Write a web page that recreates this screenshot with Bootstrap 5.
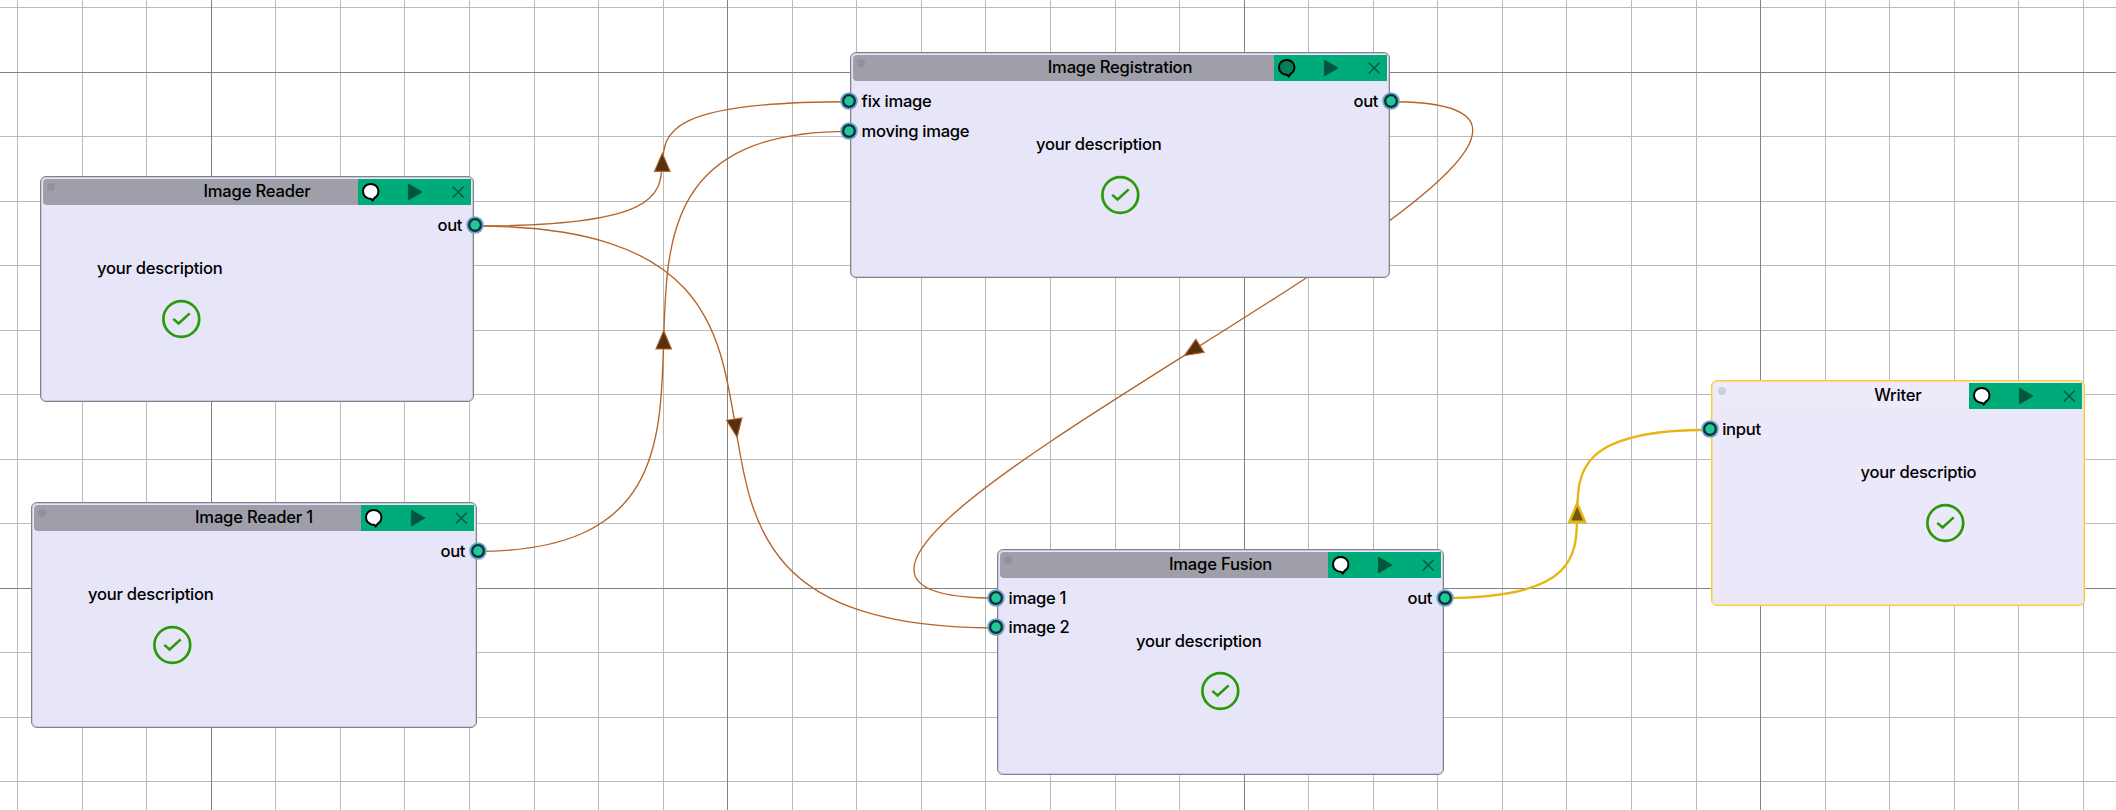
<!DOCTYPE html>
<html lang="en">
<head>
<meta charset="utf-8">
<title>Workflow editor</title>
<link href="https://cdn.jsdelivr.net/npm/bootstrap@5.3.0/dist/css/bootstrap.min.css" rel="stylesheet">
<style>
body { font-family: Inter, "Liberation Sans", sans-serif; font-size: 16.6px; font-weight: 500; letter-spacing: -.3px; line-height: 20px; color: #000; background: #fff; }
.board { width: 2116px; height: 810px; }
.flow-node { position: absolute; height: 226px; border: 1px solid #80838e; border-radius: 6px; background: #e7e6f8; box-shadow: inset 0 0 0 1px #c9c9d9; }
.node-head { height: 26px; margin: 2px 2px 0; border-radius: 4px 0 0 4px; background: #9f9faa; }
.node-title { padding-top: 2px; letter-spacing: -.2px; }
.node-dot { position: absolute; left: 6px; top: 6px; width: 8px; height: 8px; border-radius: 50%; background: #92929c; }
.node-tools { position: absolute; right: 2px; top: 2px; width: 113px; height: 26px; background: #00ab7a; }
.node-body { display: grid; }
.node-body > * { grid-area: 1 / 1; }
.ports { margin-top: 10px; row-gap: 9.7px; }
.port { height: 20px; gap: 3.6px; }
.ports-in { margin-left: -11px; justify-self: start; }
.ports-out { margin-right: -10.8px; justify-self: end; }
.port svg { display: block; }
.widget { width: 168px; margin-top: 53px; }
.widget svg { display: block; margin: 20.5px auto 0; }
.desc { white-space: nowrap; width: 126px; overflow: hidden; letter-spacing: -.25px; }
.active { background: #ebe8f9; border-color: #fbcb38; box-shadow: inset 0 0 0 1px #f7df98; }
.active .node-head { background: #edebfa; }
.active .node-dot { background: #cfcedb; }
.active .desc { width: 116px; }
</style>
</head>
<body class="overflow-hidden">
<svg width="0" height="0" class="position-absolute">
  <symbol id="port" viewBox="0 0 18 18"><circle cx="9" cy="9" r="8.8" fill="#6ea8c7"/><circle cx="9" cy="9" r="7" fill="#112f40"/><circle cx="9" cy="9" r="4.7" fill="#1fc998"/></symbol>
  <symbol id="check" viewBox="0 0 40 40"><circle cx="20.3" cy="20" r="17.9" fill="none" stroke="#2a9a08" stroke-width="2.7"/><path d="M12.3 19.9 L17.6 24.5 L28.7 14.4" fill="none" stroke="#2a9a08" stroke-width="2.5"/></symbol>
  <symbol id="tools" viewBox="0 0 113 26"><path d="M13.6 19.9 C8.4 19.8 5 16.6 5 12.4 C5 8 8.3 5 12.7 5 C17 5 20.4 8 20.4 12.3 C20.4 15.2 19 17.4 16.8 18.7 L14.6 21.6 Z" fill="var(--bubble)" stroke="#000" stroke-width="2" stroke-linejoin="round"/><path d="M50.4 5 L64 13 L50.4 21 Z" fill="#04553d" stroke="#04553d" stroke-width=".8" stroke-linejoin="round"/><path d="M94.8 7.8 L105.6 18.4 M105.6 7.8 L94.8 18.4" stroke="#04553d" stroke-width="1.4"/></symbol>
</svg>

<main class="board position-relative overflow-hidden">
  <svg class="position-absolute top-0 start-0" width="2116" height="810">
    <g id="grid" shape-rendering="crispEdges"></g>
    <g fill="none" stroke="#b5642a" stroke-width="1.35">
      <path d="M475.3 226 C841.3 226 483.3 101.7 849.3 101.7"/>
      <path d="M478 551.3 C838 551.3 489.3 131.3 849.3 131.3"/>
      <path d="M475.3 226 C931.3 226 539.7 628 995.7 628"/>
      <path d="M1391 101.7 C1786 101.7 600.7 598 995.7 598"/>
      <path d="M1444.7 598 C1707.7 598 1446.7 429.7 1709.7 429.7" stroke="#e6b714" stroke-width="2.4"/>
    </g>
    <g fill="#573010" stroke="#b5642a" stroke-width="1.1">
      <path d="M0 -10.3 L7.8 8 H-7.8 Z" transform="translate(662.3 163.4)"/>
      <path d="M0 -10.3 L7.8 8 H-7.8 Z" transform="translate(663.7 341)"/>
      <path d="M0 -10.3 L7.8 8 H-7.8 Z" transform="translate(735.5 427) rotate(171)"/>
      <path d="M0 -10.3 L7.8 8 H-7.8 Z" transform="translate(1193.2 350) rotate(238)"/>
      <path d="M0 -10.3 L7.8 8 H-7.8 Z" transform="translate(1577.2 513.8)" fill="#6f5b0a" stroke="#e6b714" stroke-width="2.5"/>
    </g>
  </svg>
  <div id="nodes"></div>
</main>

<script>
const grid = document.getElementById('grid');
const line = (k, x, y, w, h) => `<rect x="${x}" y="${y}" width="${w}" height="${h}" fill="${k % 8 ? '#b9b9b9' : '#828282'}"/>`;
const rules = [];
for (let k = -3; k < 30; k++) rules.push([k, Math.floor(211.2 + 64.56 * k), 0, 1, 810]);
for (let k = -1; k < 12; k++) rules.push([k, 0, Math.floor(72.2 + 64.5 * k), 2116, 1]);
rules.sort((a, b) => (a[0] % 8 === 0) - (b[0] % 8 === 0));
grid.innerHTML = rules.map(r => line(...r)).join('');

const nodes = [
  { title: 'Image Reader', x: 40, y: 176, w: 434, widget: 56, out: ['out'] },
  { title: 'Image Reader 1', x: 31, y: 502, w: 446, widget: 56, out: ['out'] },
  { title: 'Image Registration', x: 850, y: 52, w: 540, widget: 185, in: ['fix image', 'moving image'], out: ['out'], bubble: '#008058' },
  { title: 'Image Fusion', x: 997, y: 548.6, w: 447, widget: 138, in: ['image 1', 'image 2'], out: ['out'] },
  { title: 'Writer', x: 1710.6, y: 380, w: 374.6, widget: 149, in: ['input'], active: true }
];
const dot = '<svg width="18" height="18"><use href="#port"/></svg>';
document.getElementById('nodes').innerHTML = nodes.map(n => `
  <section class="flow-node ${n.active ? 'active' : ''}" style="left:${n.x}px;top:${n.y}px;width:${n.w}px">
    <header class="node-head text-center"><span class="node-dot"></span><div class="node-title">${n.title}</div>
      <svg class="node-tools" viewBox="0 0 113 26" style="--bubble:${n.bubble || '#fff'}"><use href="#tools"/></svg>
    </header>
    <div class="node-body">
      <div class="widget" style="margin-left:${n.widget}px"><div class="desc">your descriptio${n.active ? '' : 'n'}</div><svg width="40" height="40"><use href="#check"/></svg></div>
      <div class="ports ports-in d-flex flex-column">${(n.in || []).map(p => `<div class="port d-flex align-items-center">${dot}<span>${p}</span></div>`).join('')}</div>
      <div class="ports ports-out d-flex flex-column">${(n.out || []).map(p => `<div class="port d-flex align-items-center"><span>${p}</span>${dot}</div>`).join('')}</div>
    </div>
  </section>`).join('');
</script>
<script src="https://cdn.jsdelivr.net/npm/bootstrap@5.3.0/dist/js/bootstrap.bundle.min.js"></script>
</body>
</html>
